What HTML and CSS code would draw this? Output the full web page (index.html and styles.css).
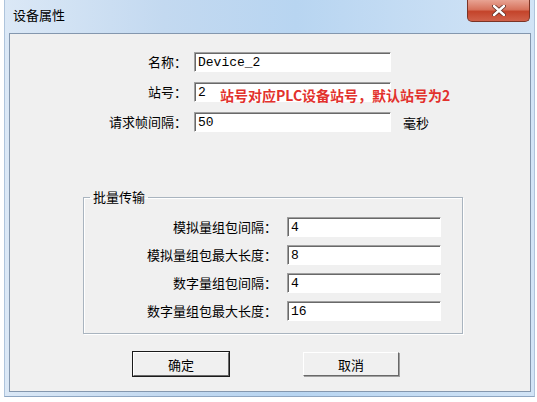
FILE: index.html
```html
<!DOCTYPE html>
<html lang="zh">

<head>
    <meta charset="UTF-8">
    <title>设备属性</title>
    <link rel="stylesheet" href="styles.css">
</head>

<body>
    <div class="window">
        <div class="titlebar">
            <span class="title">设备属性</span>
            <div class="closeButton">
                <svg width="14" height="11" viewBox="0 0 14 11">
                    <path d="M2 1 L12 10 M12 1 L2 10" stroke="#5a2a22" stroke-width="4" stroke-linecap="round" />
                    <path d="M2 1 L12 10 M12 1 L2 10" stroke="#fff" stroke-width="2.4" stroke-linecap="round" />
                </svg>
            </div>
        </div>
        <div class="client">
            <div class="mainForm">
                <label class="fieldLabel">名称：</label>
                <div class="textbox">Device_2</div>
                <span></span>

                <label class="fieldLabel">站号：</label>
                <div class="stationCell">
                    <div class="textbox">2</div>
                    <!-- 提示文字，盖在输入框上 -->
                    <span class="hint">站号对应PLC设备站号，默认站号为2</span>
                </div>
                <span></span>

                <label class="fieldLabel">请求帧间隔：</label>
                <div class="textbox">50</div>
                <span class="unit">毫秒</span>
            </div>

            <fieldset class="groupBox">
                <legend>批量传输</legend>
                <div class="groupForm">
                    <label class="fieldLabel">模拟量组包间隔：</label>
                    <div class="textbox">4</div>
                    <label class="fieldLabel">模拟量组包最大长度：</label>
                    <div class="textbox">8</div>
                    <label class="fieldLabel">数字量组包间隔：</label>
                    <div class="textbox">4</div>
                    <label class="fieldLabel">数字量组包最大长度：</label>
                    <div class="textbox">16</div>
                </div>
            </fieldset>

            <div class="buttonRow">
                <button class="dlgButton default">确定</button>
                <button class="dlgButton">取消</button>
            </div>
        </div>
    </div>
</body>

</html>
```

FILE: styles.css
```css
* {
    box-sizing: border-box;
}

body {
    margin: 0;
    padding: 0;
    background-color: #ffffff;
    font-family: "Noto Sans CJK SC", "Noto Sans", sans-serif;
    font-size: 13px;
    color: #000;
}

/* 窗口外框 */
.window {
    width: 531px;
    height: 397px;
    margin-left: 4px;
    padding: 0 3px 4px 4px;
    background: linear-gradient(90deg, #dbe8f6 0%, #c3d9f0 30%, #b8d5f1 55%, #d2e4f6 100%);
    border-left: 1px solid #aec4dc;
    border-right: 1px solid #aec4dc;
    border-bottom: 1px solid #8ea6c2;
    display: flex;
    flex-direction: column;
}

.titlebar {
    height: 33px;
    display: flex;
    align-items: flex-start;
    justify-content: space-between;
}

.title {
    margin-top: 7px;
    margin-left: 4px;
    font-size: 13px;
    line-height: 16px;
}

.closeButton {
    width: 63px;
    height: 22px;
    margin-right: 1px;
    border: 1px solid #7b3426;
    border-top: none;
    border-radius: 0 0 5px 5px;
    background: linear-gradient(180deg, #e8a393 0%, #d7735d 45%, #c4442b 55%, #d0614a 100%);
    display: flex;
    justify-content: center;
    align-items: center;
}

.client {
    flex: 1;
    background-color: #f0f0f0;
    border: 1px solid #8497ae;
}

/* 上面三行 */
.mainForm {
    display: grid;
    grid-template-columns: 177px 197px auto;
    column-gap: 7px;
    row-gap: 10px;
    align-items: center;
    padding-top: 18px;
}

.fieldLabel {
    text-align: right;
    white-space: nowrap;
    line-height: 20px;
}

.textbox {
    height: 20px;
    background-color: #fff;
    border: 1px solid;
    border-color: #a0a0a0 #ffffff #ffffff #a0a0a0;
    box-shadow: inset 1px 1px 0 #696969;
    padding: 1px 0 0 3px;
    font-family: "Liberation Mono", monospace;
    font-size: 13px;
    line-height: 17px;
}

.stationCell {
    position: relative;
}

.hint {
    position: absolute;
    left: 26px;
    top: 5px;
    color: #e2312c;
    font-weight: bold;
    font-size: 14px;
    line-height: 16px;
    white-space: nowrap;
}

.unit {
    margin-left: 5px;
}

/* 批量传输 */
.groupBox {
    width: 380px;
    height: 145px;
    margin: 57px 0 0 73px;
    padding: 4px 0 0 0;
    border: 1px solid #a9b4bf;
    box-shadow: inset 1px 1px 0 #ffffff, 1px 1px 0 #ffffff;
}

.groupBox legend {
    margin-left: 6px;
    padding: 0 3px;
    font-size: 13px;
    line-height: 16px;
}

.groupForm {
    display: grid;
    grid-template-columns: 193px 154px;
    column-gap: 10px;
    row-gap: 8px;
    padding-top: 8px;
}

/* 按钮 */
.buttonRow {
    display: flex;
    gap: 74px;
    margin: 18px 0 0 123px;
}

.dlgButton {
    width: 96px;
    height: 24px;
    padding: 0;
    background-color: #f0f0f0;
    border: 1px solid;
    border-color: #ffffff #696969 #696969 #ffffff;
    box-shadow: 1px 1px 0 #a0a0a0;
    font-family: "Noto Sans CJK SC", sans-serif;
    font-size: 13px;
    cursor: pointer;
}

.dlgButton.default {
    outline: 1px solid #1a1a1a;
}
```
